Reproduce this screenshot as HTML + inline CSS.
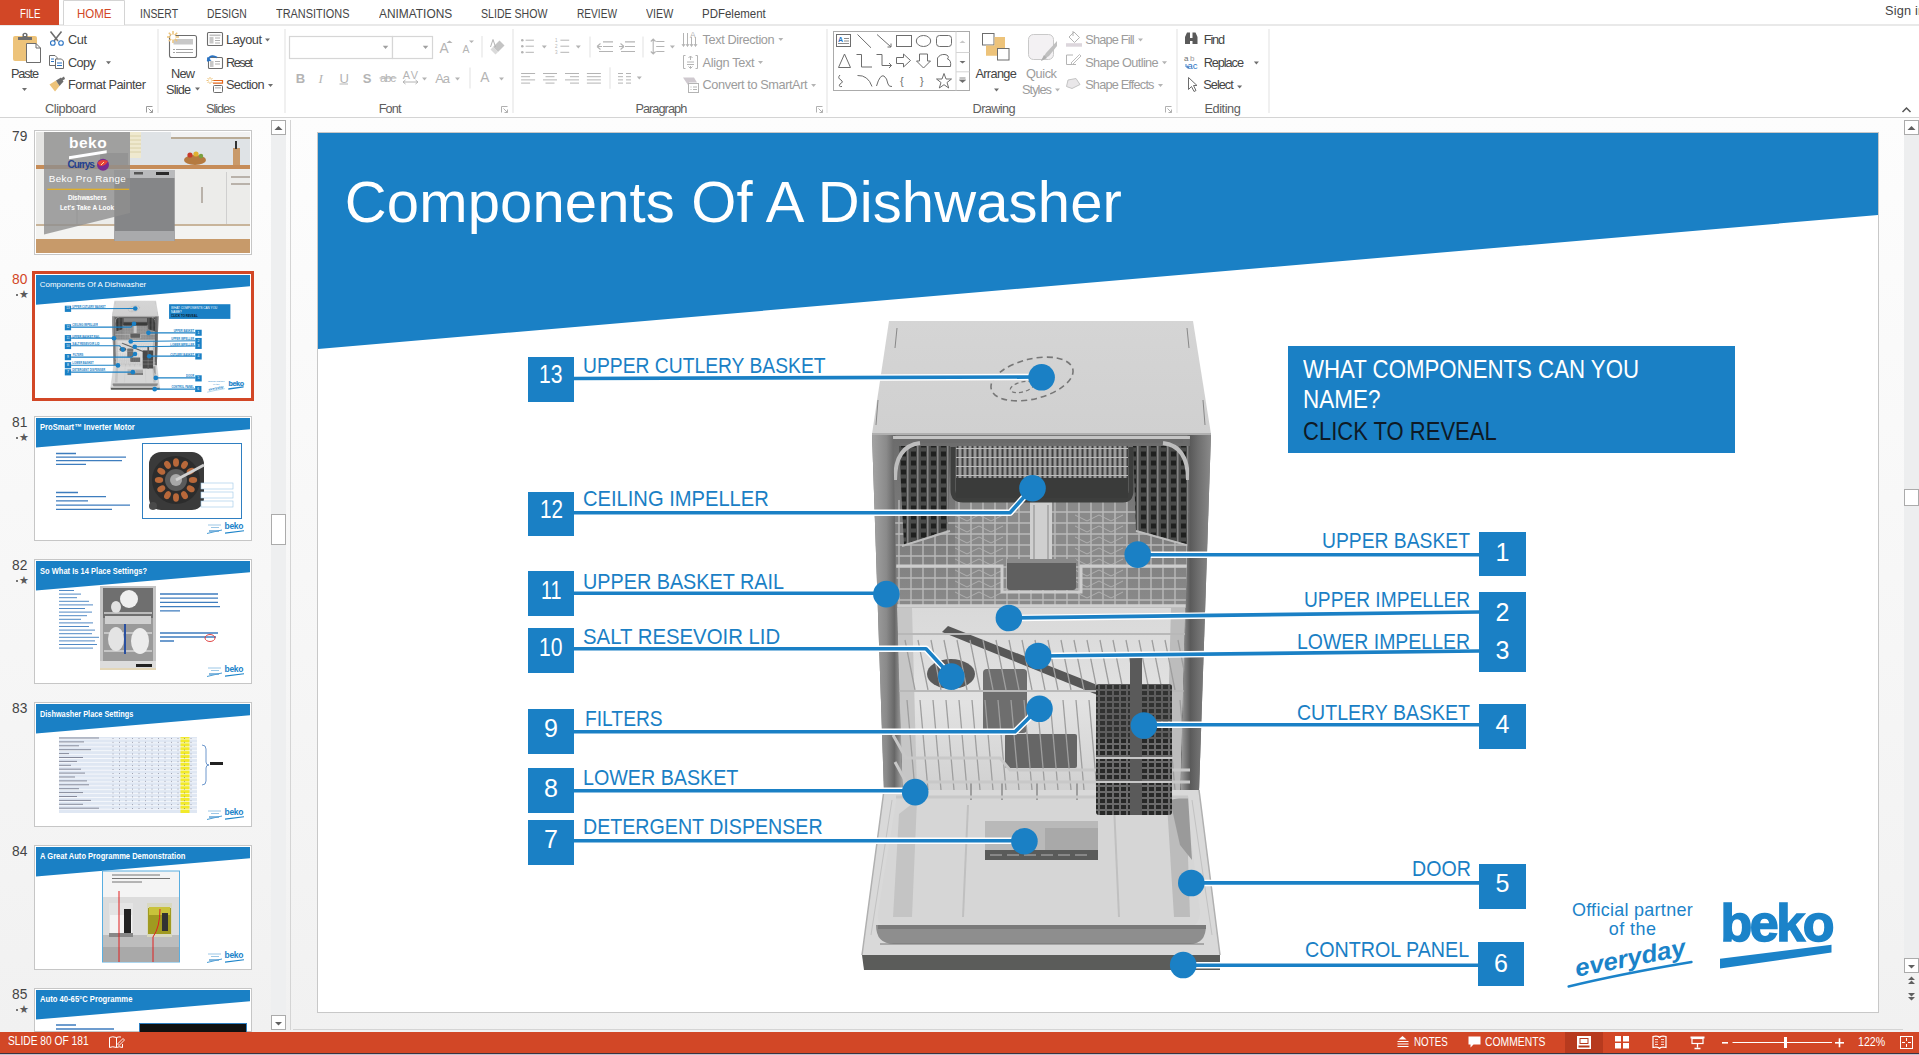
<!DOCTYPE html>
<html><head><meta charset="utf-8"><style>
*{margin:0;padding:0;box-sizing:border-box}
html,body{width:1919px;height:1055px;overflow:hidden;background:#fff;font-family:"Liberation Sans",sans-serif}
.t{position:absolute;white-space:pre;line-height:1}
.a{position:absolute}
svg{position:absolute;left:0;top:0;overflow:visible}
</style></head>
<body>
<svg width="1919" height="120">
<rect x="0" y="24.5" width="1919" height="1" fill="#D4D4D4"/>
<rect x="0" y="0" width="59" height="25" fill="#D24726"/>
<path d="M63.5 25 V0.5 H124.5 V25" fill="#fff" stroke="#D4D4D4" stroke-width="1"/>
<rect x="0" y="117" width="1919" height="1" fill="#D4D4D4"/>
<g fill="#E1E1E1">
<rect x="157.5" y="29" width="1" height="84"/>
<rect x="284.5" y="29" width="1" height="84"/>
<rect x="512.5" y="29" width="1" height="84"/>
<rect x="826.5" y="29" width="1" height="84"/>
<rect x="1176.5" y="29" width="1" height="84"/>
<rect x="1268.5" y="29" width="1" height="84"/>
</g>
<rect x="13" y="36" width="24" height="25" rx="2" fill="#EDC37A"/><path d="M18 40 V37 H22.5 V34 Q25 31.5 27.5 34 V37 H32 V40 Z" fill="#6D6D6D"/><rect x="24" y="34.2" width="2" height="1.8" fill="#fff"/><path d="M26.5 62.5 V43.5 H36 L40.5 48 V62.5 Z" fill="#fff" stroke="#6D6D6D" stroke-width="1"/><path d="M36 43.5 V48 H40.5" fill="none" stroke="#6D6D6D" stroke-width="1"/><path d="M22.0 88.0 h5 l-2.5 3.0 z" fill="#6D6D6D"/><path d="M50.5 31.5 L58 41 M61.5 31.5 L54 41" stroke="#6D6D6D" stroke-width="1.6"/><circle cx="52.8" cy="43" r="2.3" fill="none" stroke="#2A73C3" stroke-width="1.1"/><circle cx="61" cy="43" r="2.3" fill="none" stroke="#2A73C3" stroke-width="1.1"/><path d="M49.5 65.5 V55.5 H55 L57 57.5 V65.5 Z" fill="#fff" stroke="#6D6D6D"/><path d="M55.5 68.5 V59 H61.5 L63.5 61 V68.5 Z" fill="#fff" stroke="#6D6D6D"/><path d="M51 59h3M51 61.5h3M57 63h5M57 65.5h5" stroke="#2A73C3" stroke-width="1"/><path d="M106.0 61.3 h5 l-2.5 3.0 z" fill="#6D6D6D"/><path d="M49.5 84.5 L56 80.5 L59.5 86 L55 91.5 Z" fill="#EDC37A"/><path d="M56 80.5 L61 77.5 L63.5 81.5 L59.5 86 Z" fill="#6D6D6D"/><path d="M61 78.5 L64 76.5 L65 79 L62.5 80.5Z" fill="#6D6D6D"/><path d="M146.5 112.5 V106.5 H152.5" fill="none" stroke="#9A9A9A" stroke-width="1"/><path d="M148.5 108.5 L152.5 112.5 M152.5 109.5 V112.5 H149.5" fill="none" stroke="#9A9A9A" stroke-width="1"/><rect x="169.5" y="35.5" width="27" height="22" rx="2" fill="#fff" stroke="#6D6D6D" stroke-width="1.1"/><rect x="173.5" y="39" width="19.5" height="5.5" fill="#C8C8C8"/><path d="M173 49.5h2M176 49.5h17M173 52.5h2M176 52.5h17" stroke="#9A9A9A" stroke-width="0.9"/><g stroke="#EDC37A" stroke-width="1.5"><path d="M173 31v12M167 37h12M168.8 32.8l8.4 8.4M177.2 32.8l-8.4 8.4"/></g><circle cx="173" cy="37" r="2.6" fill="#fff"/><path d="M195.0 87.5 h5 l-2.5 3.0 z" fill="#6D6D6D"/><rect x="207.5" y="32.5" width="15" height="13" rx="1" fill="#fff" stroke="#6D6D6D" stroke-width="1.1"/><rect x="209.5" y="34.5" width="11" height="1.6" fill="#C0C0C0"/><rect x="209.5" y="37" width="4" height="6.5" fill="#C8C8C8"/><path d="M215 38h5M215 40.5h5M215 43h5" stroke="#9A9A9A" stroke-width="0.8"/><path d="M265.0 38.5 h5 l-2.5 3.0 z" fill="#6D6D6D"/><rect x="208.5" y="57.5" width="14" height="11" rx="1" fill="#fff" stroke="#6D6D6D" stroke-width="1.1"/><rect x="210" y="61" width="3.5" height="6" fill="#C8C8C8"/><path d="M215 61.5h5M215 64h5" stroke="#9A9A9A" stroke-width="0.8"/><path d="M207.5 61 Q210 53.5 217 57.5" fill="none" stroke="#2A73C3" stroke-width="1.6"/><path d="M207 57 L207.3 61.8 L211.5 60.5Z" fill="#2A73C3"/><path d="M213 80.5 H222.5 V83.2 H213" fill="none" stroke="#E2661A" stroke-width="1.2"/><rect x="213.5" y="85.5" width="9" height="7" rx="1" fill="#fff" stroke="#6D6D6D"/><rect x="215" y="87" width="6" height="1.6" fill="#C8C8C8"/><g stroke="#EDC37A" stroke-width="1"><path d="M210 77v7M206.5 80.5h7M207.5 78l5 5M212.5 78l-5 5"/></g><circle cx="210" cy="80.5" r="1.5" fill="#fff"/><path d="M268.0 84.0 h5 l-2.5 3.0 z" fill="#6D6D6D"/><rect x="289.5" y="36.5" width="103" height="22" fill="#fff" stroke="#D6D6D6" stroke-width="1.2"/><rect x="392.5" y="36.5" width="40" height="22" fill="#fff" stroke="#D6D6D6" stroke-width="1.2"/><path d="M382.8 45.8 h5.5 l-2.8 3.3 z" fill="#A0A0A0"/><path d="M422.8 45.8 h5.5 l-2.8 3.3 z" fill="#A0A0A0"/><path d="M446.5 43 l3-2.5 l3 2.5z" fill="#B4B4B4"/><path d="M469 40.5 h5 l-2.5 2.5z" fill="#B4B4B4"/><rect x="481.5" y="36" width="1" height="21.5" fill="#E1E1E1"/><rect x="469.5" y="67.5" width="1" height="21" fill="#E1E1E1"/><path d="M493 47 L499.5 40.5 L504.5 45.5 L498 52 Z" fill="#C4C4C4"/><path d="M490.5 49.5 L493 47 L498 52 L495.5 54.5 Z" fill="#DADADA"/><path d="M490.5 47 L493 39.5 L495.5 47" fill="none" stroke="#B4B4B4" stroke-width="1"/><rect x="339.5" y="83.5" width="8.5" height="1" fill="#B4B4B4"/><rect x="379.5" y="77.5" width="17" height="1" fill="#B4B4B4"/><path d="M403 82 H418 M403 82 l2.5-2 M403 82 l2.5 2 M418 82 l-2.5-2 M418 82 l-2.5 2" stroke="#B4B4B4" stroke-width="1" fill="none"/><path d="M422.0 77.5 h5 l-2.5 3.0 z" fill="#B4B4B4"/><path d="M455.0 77.5 h5 l-2.5 3.0 z" fill="#B4B4B4"/><path d="M499.0 77.5 h5 l-2.5 3.0 z" fill="#B4B4B4"/><path d="M501.5 112.5 V106.5 H507.5" fill="none" stroke="#B0B0B0" stroke-width="1"/><path d="M503.5 108.5 L507.5 112.5 M507.5 109.5 V112.5 H504.5" fill="none" stroke="#B0B0B0" stroke-width="1"/><g fill="#B4B4B4"><circle cx="522.3" cy="40.2" r="1.3"/><circle cx="522.3" cy="46.2" r="1.3"/><circle cx="522.3" cy="52.3" r="1.3"/></g><path d="M525.6 40.2h8.3M525.6 46.2h8.3M525.6 52.3h8.3M560.4 40.2h8.8M560.4 46.2h8.8M560.4 52.3h8.8" stroke="#B4B4B4" stroke-width="1"/><text x="555" y="42" font-size="4.5" fill="#B4B4B4" font-family="Liberation Sans">1</text><text x="555" y="48" font-size="4.5" fill="#B4B4B4" font-family="Liberation Sans">2</text><text x="555" y="54" font-size="4.5" fill="#B4B4B4" font-family="Liberation Sans">3</text><path d="M541.8 45.5 h5 l-2.5 3.0 z" fill="#B4B4B4"/><path d="M575.8 45.5 h5 l-2.5 3.0 z" fill="#B4B4B4"/><path d="M669.9 45.5 h5 l-2.5 3.0 z" fill="#B4B4B4"/><rect x="589.5" y="36.5" width="1" height="21" fill="#E1E1E1"/><rect x="642.5" y="36.5" width="1" height="21" fill="#E1E1E1"/><rect x="609.5" y="67.3" width="1" height="21.5" fill="#E1E1E1"/><path d="M603 41.9h10M603 46.5h10M599 51.5h14M597 46.5 l3.5-3 M597 46.5 l3.5 3 M597 46.5 h5" stroke="#B4B4B4" stroke-width="1.1" fill="none"/><path d="M625 41.9h10M625 46.5h10M621 51.5h14M624 46.5 l-3.5-3 M624 46.5 l-3.5 3 M624 46.5 h-5" stroke="#B4B4B4" stroke-width="1.1" fill="none"/><path d="M653.2 39 V54 M650.8 41.5 l2.4-2.5 l2.4 2.5 M650.8 51.5 l2.4 2.5 l2.4-2.5 M656.2 41.5h8.2M656.2 46.5h8.2M656.2 51.5h8.2" stroke="#B4B4B4" stroke-width="1.1" fill="none"/><path d="M521.1 73.5h14M521.1 76.7h9M521.1 79.9h14M521.1 83.1h9" stroke="#B4B4B4" stroke-width="1"/><path d="M543.0 73.5h14M545.5 76.7h9M543.0 79.9h14M545.5 83.1h9" stroke="#B4B4B4" stroke-width="1"/><path d="M565.0 73.5h14M570.0 76.7h9M565.0 79.9h14M570.0 83.1h9" stroke="#B4B4B4" stroke-width="1"/><path d="M586.9 73.5h14M586.9 76.7h14M586.9 79.9h14M586.9 83.1h14" stroke="#B4B4B4" stroke-width="1"/><path d="M618 73.5h5M618 76.7h5M618 79.9h5M618 83.1h5M626 73.5h5M626 76.7h5M626 79.9h5M626 83.1h5" stroke="#B4B4B4" stroke-width="1"/><path d="M636.8 76.5 h5 l-2.5 3.0 z" fill="#B4B4B4"/><path d="M683.5 33 V46 M687.5 33 V46 M691.5 37 V46 M695.5 37 V46" stroke="#B4B4B4" stroke-width="1"/><path d="M682 44 l1.5 2.5 l1.5-2.5 M686 44 l1.5 2.5 l1.5-2.5 M690 44 l1.5 2.5 l1.5-2.5 M694 44 l1.5 2.5 l1.5-2.5" stroke="#B4B4B4" fill="none" stroke-width="1"/><text x="690" y="38" font-size="8.5" fill="#B4B4B4" font-family="Liberation Sans">A</text><path d="M685.5 55.5 h-2 v13 h2 M695.5 55.5 h2 v13 h-2 M687 62h7M687 64.5h7 M690.5 56 v4 M688.5 58 l2-2 l2 2 M690.5 68 v-2 M688.5 66.5 l2 2 l2-2" stroke="#B4B4B4" stroke-width="1" fill="none"/><path d="M683 77.5 h11 l3 5 h-8 v4 z" fill="#CFC9CF"/><rect x="688.5" y="83.5" width="10" height="9" fill="#fff" stroke="#B4B4B4"/><path d="M690.5 87h1M693 87h4M690.5 89.5h1M693 89.5h4" stroke="#B4B4B4"/><path d="M778.3 38.0 h5 l-2.5 3.0 z" fill="#B4B4B4"/><path d="M758.0 61.0 h5 l-2.5 3.0 z" fill="#B4B4B4"/><path d="M811.1 84.0 h5 l-2.5 3.0 z" fill="#B4B4B4"/><path d="M816.5 112.5 V106.5 H822.5" fill="none" stroke="#B0B0B0" stroke-width="1"/><path d="M818.5 108.5 L822.5 112.5 M822.5 109.5 V112.5 H819.5" fill="none" stroke="#B0B0B0" stroke-width="1"/><rect x="833.5" y="31.5" width="136" height="59" fill="#fff" stroke="#ABABAB" stroke-width="1"/><rect x="955.5" y="31.5" width="1" height="59" fill="#D4D4D4"/><rect x="956" y="52" width="13.5" height="1" fill="#D4D4D4"/><rect x="956" y="71.3" width="13.5" height="1" fill="#D4D4D4"/><path d="M959.5 43 l3-2.5 l3 2.5z" fill="#C8C8C8"/><path d="M959.5 61 h6 l-3 2.5z" fill="#6D6D6D"/><path d="M959.5 78 h6 M959.5 80 h6 l-3 2.5z" stroke="#6D6D6D" fill="#6D6D6D" stroke-width="0.8"/><rect x="836.5" y="34.5" width="14" height="12" fill="#fff" stroke="#6D6D6D"/><text x="838" y="42" font-size="7" font-weight="bold" fill="#2A73C3" font-family="Liberation Sans">A</text><path d="M844 38.5h5M844 41h5M838 43.5h11" stroke="#6D6D6D" stroke-width="0.8"/><path d="M857.5 34.5 L871 47.8" stroke="#6D6D6D"/><path d="M877 34.5 L891 47 M891 47 v-3.5 M891 47 h-3.5" stroke="#6D6D6D" fill="none"/><rect x="896.5" y="35.5" width="15" height="11" fill="none" stroke="#6D6D6D"/><ellipse cx="923.5" cy="41" rx="7.2" ry="5.5" fill="none" stroke="#6D6D6D"/><rect x="936.5" y="35.5" width="15" height="11" rx="3" fill="none" stroke="#6D6D6D"/><path d="M838.5 67.5 L844.5 54 L850.5 67.5 Z" fill="none" stroke="#6D6D6D"/><path d="M856.5 54.5 H861.5 V67 H872" fill="none" stroke="#6D6D6D"/><path d="M876.5 54.5 H882 V65.5 H891.5 M889 63 l2.5 2.5 l-2.5 2.5" fill="none" stroke="#6D6D6D"/><path d="M896.5 57.5 H903.5 V54 L910.5 60.5 L903.5 67 V63.5 H896.5 Z" fill="none" stroke="#6D6D6D"/><path d="M919.5 54 H927.5 V61 H930.5 L923.5 68 L916.5 61 H919.5 Z" fill="none" stroke="#6D6D6D"/><path d="M937.5 58 Q940 54 945 54.5 Q950 55.5 947.5 59 Q951.5 60 950.5 66.5 H937.5 Z" fill="none" stroke="#6D6D6D"/><path d="M840 75 Q837 78 841 80 Q844 82 840 84 Q838 87 842 86.5" fill="none" stroke="#6D6D6D"/><path d="M857.5 75.5 Q868 75 872 86.5" fill="none" stroke="#6D6D6D"/><path d="M876.5 86 Q880 74 884 76 Q887 78 888 84 Q889 87 892 86.5" fill="none" stroke="#6D6D6D"/><text x="900" y="85" font-size="11" fill="#6D6D6D" font-family="Liberation Sans">{</text><text x="920" y="85" font-size="11" fill="#6D6D6D" font-family="Liberation Sans">}</text><path d="M944 73.5 L946 79 L951.5 79 L947 82.5 L948.7 88 L944 84.7 L939.3 88 L941 82.5 L936.5 79 L942 79 Z" fill="none" stroke="#6D6D6D"/><rect x="982.5" y="33.5" width="11.5" height="11.5" fill="#fff" stroke="#6D6D6D"/><path d="M994.5 37 H1005 V48 H997 V55.7 H986 V45.5 H994.5 Z" fill="#EDC37A"/><rect x="997.5" y="48.5" width="11.5" height="11.5" fill="#fff" stroke="#6D6D6D"/><path d="M994.0 88.5 h5 l-2.5 3.0 z" fill="#6D6D6D"/><rect x="1028.5" y="34.5" width="25" height="25" rx="5" fill="#F3F1F3" stroke="#C9C9C9"/><path d="M1041 61 L1046 53 L1057 41 L1057 46 L1049 56 Z" fill="#C0C0C0"/><path d="M1041 61 l3-6 l3 3z" fill="#B0B0B0"/><path d="M1055.0 88.5 h5 l-2.5 3.0 z" fill="#B4B4B4"/><rect x="1066" y="43.2" width="16" height="3.5" fill="#DCD6DC"/><path d="M1069 37 L1074 32 L1079.5 37.5 L1074.5 42.5 Z" fill="#fff" stroke="#B4B4B4"/><path d="M1073 31 V36" stroke="#B4B4B4"/><path d="M1066.5 55 H1073 M1066.5 55 V64.5 H1076" fill="none" stroke="#B4B4B4"/><path d="M1071 63 L1079.5 54.5 L1081 56 L1072.5 64.5 Z" fill="#fff" stroke="#B4B4B4" stroke-width="0.9"/><path d="M1068 80 L1076 78.5 L1080 84.5 L1072 88.5 L1066.5 86.5 Z" fill="#E9E7E9" stroke="#C4C4C4"/><path d="M1138.0 38.5 h5 l-2.5 3.0 z" fill="#B4B4B4"/><path d="M1162.0 61.3 h5 l-2.5 3.0 z" fill="#B4B4B4"/><path d="M1158.0 84.0 h5 l-2.5 3.0 z" fill="#B4B4B4"/><path d="M1165.5 112.5 V106.5 H1171.5" fill="none" stroke="#B0B0B0" stroke-width="1"/><path d="M1167.5 108.5 L1171.5 112.5 M1171.5 109.5 V112.5 H1168.5" fill="none" stroke="#B0B0B0" stroke-width="1"/><path d="M1185 44 V37 L1187 32.5 H1190 V38 H1192.5 V32.5 H1195.5 L1197.5 37 V44 H1192.5 V41 H1190 V44 Z" fill="#5A5A5A"/><text x="1184" y="61" font-size="8" fill="#6D6D6D" font-family="Liberation Sans">a</text><text x="1190" y="61" font-size="8" fill="#9A9A9A" font-family="Liberation Sans">b</text><text x="1187.5" y="69" font-size="9.5" fill="#2A73C3" font-family="Liberation Sans">ac</text><path d="M1186 64 v3 h2.5 M1187 65.8 l1.5 1.2 l-1.5 1.2" stroke="#2A73C3" stroke-width="0.9" fill="none"/><path d="M1253.9 61.5 h5 l-2.5 3.0 z" fill="#6D6D6D"/><path d="M1188.5 77.5 V89.5 L1191.5 86.5 L1194 91.5 L1196 90.5 L1193.5 85.5 L1197 85.5 Z" fill="#fff" stroke="#6D6D6D" stroke-width="1"/><path d="M1237.1 85.5 h5 l-2.5 3.0 z" fill="#6D6D6D"/><path d="M1902.5 112 L1906.5 108 L1910.5 112" fill="none" stroke="#555" stroke-width="1.5"/>
</svg><div style="position:absolute;left:0;top:0.8px"><div class=t style='left:19.5px;top:6.8px;font-size:12.75px;color:#fff;transform:scaleX(0.7610);transform-origin:0 0;'>FILE</div>
<div class=t style='left:76.5px;top:6.8px;font-size:12.75px;color:#D24726;transform:scaleX(0.9020);transform-origin:0 0;'>HOME</div>
<div class=t style='left:139.5px;top:6.8px;font-size:12.75px;color:#444444;transform:scaleX(0.8167);transform-origin:0 0;'>INSERT</div>
<div class=t style='left:207.0px;top:6.8px;font-size:12.75px;color:#444444;transform:scaleX(0.8120);transform-origin:0 0;'>DESIGN</div>
<div class=t style='left:276.0px;top:6.8px;font-size:12.75px;color:#444444;transform:scaleX(0.8575);transform-origin:0 0;'>TRANSITIONS</div>
<div class=t style='left:378.8px;top:6.8px;font-size:12.75px;color:#444444;transform:scaleX(0.9336);transform-origin:0 0;'>ANIMATIONS</div>
<div class=t style='left:481.0px;top:6.8px;font-size:12.75px;color:#444444;transform:scaleX(0.8306);transform-origin:0 0;'>SLIDE SHOW</div>
<div class=t style='left:577.0px;top:6.8px;font-size:12.75px;color:#444444;transform:scaleX(0.7953);transform-origin:0 0;'>REVIEW</div>
<div class=t style='left:645.8px;top:6.8px;font-size:12.75px;color:#444444;transform:scaleX(0.8345);transform-origin:0 0;'>VIEW</div>
<div class=t style='left:702.0px;top:6.8px;font-size:12.75px;color:#444444;transform:scaleX(0.9002);transform-origin:0 0;'>PDFelement</div>
<div class=t style='left:1885.0px;top:4.5px;font-size:12.75px;color:#444444;letter-spacing:0.17px;'>Sign in</div>
<div class=t style='left:11.0px;top:67.0px;font-size:12.75px;color:#444444;letter-spacing:-1.15px;'>Paste</div>
<div class=t style='left:68.0px;top:33.0px;font-size:12.75px;color:#444444;letter-spacing:-0.42px;'>Cut</div>
<div class=t style='left:68.0px;top:55.8px;font-size:12.75px;color:#444444;letter-spacing:-0.59px;'>Copy</div>
<div class=t style='left:68.0px;top:78.7px;font-size:12.75px;color:#444444;letter-spacing:-0.49px;'>Format Painter</div>
<div class=t style='left:45.0px;top:101.8px;font-size:12.75px;color:#5E5E5E;letter-spacing:-0.45px;'>Clipboard</div>
<div class=t style='left:171.0px;top:67.0px;font-size:12.75px;color:#444444;letter-spacing:-0.76px;'>New</div>
<div class=t style='left:166.0px;top:82.8px;font-size:12.75px;color:#444444;letter-spacing:-0.84px;'>Slide</div>
<div class=t style='left:226.0px;top:33.0px;font-size:12.75px;color:#444444;letter-spacing:-0.46px;'>Layout</div>
<div class=t style='left:226.0px;top:55.8px;font-size:12.75px;color:#444444;letter-spacing:-1.58px;'>Reset</div>
<div class=t style='left:226.0px;top:78.7px;font-size:12.75px;color:#444444;letter-spacing:-0.67px;'>Section</div>
<div class=t style='left:206.0px;top:101.8px;font-size:12.75px;color:#5E5E5E;letter-spacing:-1.05px;'>Slides</div>
<div class=t style='left:378.7px;top:101.8px;font-size:12.75px;color:#5E5E5E;letter-spacing:-0.91px;'>Font</div>
<div class=t style='left:295.7px;top:71.1px;font-size:13.04px;color:#B4B4B4;font-weight:bold;'>B</div>
<div class=t style='left:318.5px;top:71.1px;font-size:13.04px;color:#B4B4B4;font-style:italic;font-family:"Liberation Serif",sans-serif;'>I</div>
<div class=t style='left:339.4px;top:71.1px;font-size:13.04px;color:#B4B4B4;'>U</div>
<div class=t style='left:362.7px;top:71.1px;font-size:13.04px;color:#B4B4B4;font-weight:bold;'>S</div>
<div class=t style='left:380.0px;top:72.3px;font-size:11.59px;color:#B4B4B4;letter-spacing:-1.34px;'>abc</div>
<div class=t style='left:402.7px;top:69.3px;font-size:10.87px;color:#B4B4B4;letter-spacing:1.61px;'>AV</div>
<div class=t style='left:435.3px;top:71.1px;font-size:13.04px;color:#B4B4B4;letter-spacing:-1.25px;'>Aa</div>
<div class=t style='left:480.2px;top:70.5px;font-size:13.77px;color:#B4B4B4;'>A</div>
<div class=t style='left:439.6px;top:41.0px;font-size:13.77px;color:#B4B4B4;'>A</div>
<div class=t style='left:462.4px;top:43.8px;font-size:10.43px;color:#B4B4B4;'>A</div>
<div class=t style='left:702.6px;top:33.3px;font-size:12.75px;color:#9C9C9C;letter-spacing:-0.40px;'>Text Direction</div>
<div class=t style='left:702.6px;top:55.8px;font-size:12.75px;color:#9C9C9C;letter-spacing:-0.34px;'>Align Text</div>
<div class=t style='left:702.6px;top:78.7px;font-size:12.75px;color:#9C9C9C;letter-spacing:-0.43px;'>Convert to SmartArt</div>
<div class=t style='left:635.4px;top:101.8px;font-size:12.75px;color:#5E5E5E;letter-spacing:-0.96px;'>Paragraph</div>
<div class=t style='left:975.4px;top:66.9px;font-size:12.75px;color:#444444;letter-spacing:-0.65px;'>Arrange</div>
<div class=t style='left:1026.0px;top:66.9px;font-size:12.75px;color:#9C9C9C;letter-spacing:-0.40px;'>Quick</div>
<div class=t style='left:1022.0px;top:82.8px;font-size:12.75px;color:#9C9C9C;letter-spacing:-0.95px;'>Styles</div>
<div class=t style='left:1085.2px;top:33.0px;font-size:12.75px;color:#9C9C9C;letter-spacing:-0.80px;'>Shape Fill</div>
<div class=t style='left:1085.2px;top:55.8px;font-size:12.75px;color:#9C9C9C;letter-spacing:-0.61px;'>Shape Outline</div>
<div class=t style='left:1085.2px;top:78.7px;font-size:12.75px;color:#9C9C9C;letter-spacing:-0.82px;'>Shape Effects</div>
<div class=t style='left:972.6px;top:101.8px;font-size:12.75px;color:#5E5E5E;letter-spacing:-0.63px;'>Drawing</div>
<div class=t style='left:1203.7px;top:33.0px;font-size:12.75px;color:#444444;letter-spacing:-1.10px;'>Find</div>
<div class=t style='left:1203.7px;top:55.8px;font-size:12.75px;color:#444444;letter-spacing:-1.08px;'>Replace</div>
<div class=t style='left:1203.3px;top:78.7px;font-size:12.75px;color:#444444;letter-spacing:-0.99px;'>Select</div>
<div class=t style='left:1204.5px;top:101.8px;font-size:12.75px;color:#5E5E5E;letter-spacing:-0.45px;'>Editing</div></div><div class=a style="left:0;top:118px;width:1919px;height:914px;background:linear-gradient(#fdfdfd,#f1f1f1)"></div>
<svg width="1919" height="1055">
<rect x="271" y="135" width="15" height="880" fill="#EEEFF0"/>
<rect x="271.5" y="120.5" width="14" height="14" fill="#fff" stroke="#ABABAB"/>
<path d="M274.5 130 L278.5 126 L282.5 130 Z" fill="#606060"/>
<rect x="271.5" y="514.5" width="14" height="30" fill="#fff" stroke="#ABABAB"/>
<rect x="271.5" y="1015.5" width="14" height="14" fill="#fff" stroke="#ABABAB"/>
<path d="M275 1022 L278.5 1025.5 L282 1022 Z" fill="#606060"/>
<rect x="290" y="120" width="1" height="910" fill="#D4D4D4"/>
<rect x="293" y="1029" width="1610" height="1" fill="#D4D4D4"/>
<!-- right scrollbar -->
<rect x="1904" y="135" width="15" height="825" fill="#EDEEEF"/>
<rect x="1904.5" y="120.5" width="14" height="14" fill="#fff" stroke="#ABABAB"/>
<path d="M1907.5 130 L1911.5 126 L1915.5 130 Z" fill="#606060"/>
<rect x="1904.5" y="489.5" width="14" height="16" fill="#fff" stroke="#ABABAB"/>
<rect x="1904.5" y="958.5" width="14" height="14" fill="#fff" stroke="#ABABAB"/>
<path d="M1908 965 L1911.5 968.5 L1915 965 Z" fill="#606060"/>
<path d="M1908 980 l3.5-3.5 l3.5 3.5 z M1908 984 l3.5-3.5 l3.5 3.5 z" fill="#606060"/>
<path d="M1908 993 l3.5 3.5 l3.5-3.5 z M1908 997 l3.5 3.5 l3.5-3.5 z" fill="#606060"/>

</svg>
<div class=a style="left:34px;top:130px;width:218px;height:125px;border:1px solid #C6C6C6;background:#fff"></div>
<div class=a style="left:32px;top:271px;width:222px;height:130px;border:3px solid #D24726;background:#fff"></div>
<div class=a style="left:34px;top:416px;width:218px;height:125px;border:1px solid #C6C6C6;background:#fff"></div>
<div class=a style="left:34px;top:559px;width:218px;height:125px;border:1px solid #C6C6C6;background:#fff"></div>
<div class=a style="left:34px;top:702px;width:218px;height:125px;border:1px solid #C6C6C6;background:#fff"></div>
<div class=a style="left:34px;top:845px;width:218px;height:125px;border:1px solid #C6C6C6;background:#fff"></div>
<div class=a style="left:34px;top:988px;width:218px;height:44px;border:1px solid #C6C6C6;background:#fff"></div>
<div class=t style="left:18.5px;top:288.5px;font-size:11px;color:#5a5a5a">&#9733;</div><div class=a style="left:16px;top:294px;width:2px;height:1.5px;background:#777"></div>
<div class=t style="left:18.5px;top:431.5px;font-size:11px;color:#5a5a5a">&#9733;</div><div class=a style="left:16px;top:437px;width:2px;height:1.5px;background:#777"></div>
<div class=t style="left:18.5px;top:574.5px;font-size:11px;color:#5a5a5a">&#9733;</div><div class=a style="left:16px;top:580px;width:2px;height:1.5px;background:#777"></div>
<div class=t style="left:18.5px;top:1003.5px;font-size:11px;color:#5a5a5a">&#9733;</div><div class=a style="left:16px;top:1009px;width:2px;height:1.5px;background:#777"></div>
<svg width="1919" height="1055"><rect x="36" y="132" width="214" height="121" fill="#dfe3e6"/><rect x="36" y="132" width="94" height="33" fill="#e4e4e2"/><rect x="130" y="132" width="11" height="26" fill="#efe9cf"/><path d="M130 136h11M130 140h11M130 144h11M130 148h11M130 152h11" stroke="#d9d0a8" stroke-width="1"/><rect x="171" y="132" width="79" height="5" fill="#f2f2f2"/><rect x="171" y="137" width="79" height="2" fill="#b9ab96"/><rect x="100" y="153" width="28" height="12" fill="#a8a8a8"/><rect x="36" y="165" width="214" height="4" fill="#c68c58"/><rect x="36" y="169" width="214" height="62" fill="#ececea"/><rect x="76" y="192" width="2" height="35" fill="#d0d0d0"/><rect x="226" y="172" width="1" height="55" fill="#cfcfcf"/><rect x="201" y="187" width="2" height="16" fill="#b9b2aa"/><rect x="231" y="176" width="19" height="2" fill="#b9b2aa"/><rect x="231" y="183" width="19" height="2" fill="#b9b2aa"/><rect x="36" y="224" width="214" height="2" fill="#c8b49a"/><rect x="36" y="226" width="214" height="14" fill="#f3f3f1"/><rect x="36" y="239" width="214" height="14" fill="#c79a6a"/><ellipse cx="195" cy="160" rx="11" ry="5" fill="#b57a40"/><circle cx="190" cy="155" r="2.6" fill="#c83a2a"/><circle cx="196" cy="154" r="2.6" fill="#e0b030"/><circle cx="201" cy="156" r="2.2" fill="#7aa040"/><rect x="233" y="148" width="7" height="17" fill="#c99a6a"/><rect x="235" y="141" width="2" height="8" fill="#333"/><rect x="114.5" y="170" width="60" height="71" fill="#8d8e90"/><rect x="114.5" y="170" width="60" height="8" fill="#b9babc"/><rect x="134" y="172" width="9" height="2.5" fill="#555"/><rect x="156" y="172" width="13" height="3" fill="#2a2a2a"/><rect x="114.5" y="178" width="60" height="63" fill="#858688"/><rect x="114.5" y="231" width="60" height="10" fill="#a9aaac"/><polygon points="44,132 130,132 130,213 44,234.6" fill="#8f8f8f" opacity="0.8"/><path d="M69 156.3 L106.7 150.2 L106.7 153.2 L69 159.3Z" fill="#fff"/><circle cx="103" cy="164.7" r="6" fill="#7a2a90"/><path d="M97.5 163 Q101 158 108 161 Q106 166 100 166Z" fill="#e8423a"/><path d="M101 165 l3-3" stroke="#ffe9a0" stroke-width="1"/><rect x="47.3" y="188.7" width="81.8" height="1.2" fill="#e6b020"/><polygon points="36,418 250,418 250,429.3 36,447.6" fill="#1A80C5"/><path d="M56 453.5h20M56 457.1h70M56 460.7h66M56 464.3h30" stroke="#2A6FB8" stroke-width="1.3" opacity="0.9"/><path d="M56 492.5h22M56 496.7h50M56 500.9h32M56 505.1h74M56 509.3h56" stroke="#2A6FB8" stroke-width="1.3" opacity="0.9"/><rect x="142.5" y="443.5" width="99" height="75" fill="#fff" stroke="#2F7FC1" stroke-width="1"/><rect x="149" y="452" width="55" height="58" rx="12" fill="#3a3a3a"/><circle cx="153" cy="506" r="4" fill="#4a4a4a"/><circle cx="176" cy="480" r="24" fill="#2c2c2c"/><ellipse cx="193.0" cy="480.0" rx="4.2" ry="3" transform="rotate(0 193.0 480.0)" fill="#b8683a"/><ellipse cx="190.7" cy="488.8" rx="4.2" ry="3" transform="rotate(30 190.7 488.8)" fill="#b8683a"/><ellipse cx="184.5" cy="495.2" rx="4.2" ry="3" transform="rotate(60 184.5 495.2)" fill="#b8683a"/><ellipse cx="176.0" cy="497.5" rx="4.2" ry="3" transform="rotate(90 176.0 497.5)" fill="#b8683a"/><ellipse cx="167.5" cy="495.2" rx="4.2" ry="3" transform="rotate(120 167.5 495.2)" fill="#b8683a"/><ellipse cx="161.3" cy="488.8" rx="4.2" ry="3" transform="rotate(150 161.3 488.8)" fill="#b8683a"/><ellipse cx="159.0" cy="480.0" rx="4.2" ry="3" transform="rotate(180 159.0 480.0)" fill="#b8683a"/><ellipse cx="161.3" cy="471.3" rx="4.2" ry="3" transform="rotate(210 161.3 471.3)" fill="#b8683a"/><ellipse cx="167.5" cy="464.8" rx="4.2" ry="3" transform="rotate(240 167.5 464.8)" fill="#b8683a"/><ellipse cx="176.0" cy="462.5" rx="4.2" ry="3" transform="rotate(270 176.0 462.5)" fill="#b8683a"/><ellipse cx="184.5" cy="464.8" rx="4.2" ry="3" transform="rotate(300 184.5 464.8)" fill="#b8683a"/><ellipse cx="190.7" cy="471.2" rx="4.2" ry="3" transform="rotate(330 190.7 471.2)" fill="#b8683a"/><circle cx="176" cy="480" r="11" fill="#5a5a5a"/><circle cx="176" cy="480" r="6" fill="#a8a8a8"/><path d="M176 480 L204 465" stroke="#d0d0d0" stroke-width="3"/><rect x="201" y="483" width="32" height="6" fill="#fff" stroke="#9cc7e6" stroke-width="0.6"/><rect x="201" y="492" width="32" height="6" fill="#fff" stroke="#9cc7e6" stroke-width="0.6"/><rect x="201" y="501" width="32" height="6" fill="#fff" stroke="#9cc7e6" stroke-width="0.6"/><path d="M225 532.5 L244 530.2 L244 531.3 L225 533.8Z" fill="#1B83C9"/><text x="224.5" y="528.5" font-size="8.5" font-weight="bold" fill="#1B83C9" font-family="Liberation Sans" textLength="19">beko</text><path d="M208 525h13M211 527.5h8" stroke="#9cc7e6" stroke-width="1"/><path d="M207 533.5 Q215 531.5 222 530" stroke="#1B83C9" stroke-width="0.8" fill="none"/><path d="M209 531h10" stroke="#5fa3d6" stroke-width="1.5"/><polygon points="36,561 250,561 250,572.3 36,590.6" fill="#1A80C5"/><path d="M59 590.5h15M59 594.1h22M59 597.7h18M59 601.3h30M59 604.9h34M59 608.5h26M59 612.1h33M59 615.7h28M59 619.3h22M59 622.9h34M59 626.5h30M59 630.1h36M59 633.7h33M59 637.3h40M59 640.9h36M59 644.5h38M59 648.1h34" stroke="#2A6FB8" stroke-width="0.9" opacity="0.9"/><rect x="100" y="586" width="56" height="82" fill="#c4c4c4"/><rect x="103" y="588" width="50" height="75" fill="#9a9a9a"/><rect x="103" y="588" width="50" height="30" fill="#6f6f6f"/><ellipse cx="129" cy="599" rx="9" ry="9" fill="#efefef"/><ellipse cx="116" cy="607" rx="5" ry="6" fill="#e2e2e2"/><rect x="105" y="616" width="46" height="8" fill="#d0d0d0"/><path d="M104 613 H152 M104 633 H152 M104 651 H152" stroke="#d5d5d5" stroke-width="1.5"/><ellipse cx="116" cy="639" rx="8" ry="12" fill="#e4e4e4"/><ellipse cx="140" cy="641" rx="9" ry="13" fill="#ececec"/><rect x="124" y="624" width="2" height="30" fill="#2a50a0"/><rect x="100" y="661" width="56" height="8" fill="#ddd"/><rect x="136" y="664" width="16" height="3" fill="#222"/><rect x="100" y="668" width="56" height="2" fill="#e4d7b8"/><path d="M160 594.0h58M160 598.2h58M160 602.4h58M160 606.6h60M160 610.8h20" stroke="#2A6FB8" stroke-width="1.3" opacity="0.9"/><path d="M160 633.0h58M160 637.0h56M160 641.0h14" stroke="#2A6FB8" stroke-width="1.3" opacity="0.9"/><ellipse cx="210" cy="638" rx="5" ry="3.5" fill="none" stroke="#d33" stroke-width="0.9"/><path d="M225 675.5 L244 673.2 L244 674.3 L225 676.8Z" fill="#1B83C9"/><text x="224.5" y="671.5" font-size="8.5" font-weight="bold" fill="#1B83C9" font-family="Liberation Sans" textLength="19">beko</text><path d="M208 668h13M211 670.5h8" stroke="#9cc7e6" stroke-width="1"/><path d="M207 676.5 Q215 674.5 222 673" stroke="#1B83C9" stroke-width="0.8" fill="none"/><path d="M209 674h10" stroke="#5fa3d6" stroke-width="1.5"/><polygon points="36,704 250,704 250,715.3 36,733.6" fill="#1A80C5"/><rect x="59" y="737" width="138" height="76" fill="#dfe7f3"/><rect x="180.5" y="737" width="9" height="76" fill="#f2ea2a"/><path d="M59 739.0h138M59 742.9h138M59 746.8h138M59 750.7h138M59 754.6h138M59 758.5h138M59 762.4h138M59 766.3h138M59 770.2h138M59 774.1h138M59 778.0h138M59 781.9h138M59 785.8h138M59 789.7h138M59 793.6h138M59 797.5h138M59 801.4h138M59 805.3h138M59 809.2h138" stroke="#ffffff" stroke-width="0.8" opacity="0.9"/><path d="M59 738.0h40M59 741.9h25M59 745.8h20M59 749.7h32M59 753.6h10M59 757.5h24M59 761.4h18M59 765.3h12M59 769.2h22M59 773.1h26M59 777.0h16M59 780.9h28M59 784.8h30M59 788.7h20M59 792.6h24M59 796.5h18M59 800.4h32M59 804.3h24M59 808.2h40" stroke="#3b3b50" stroke-width="0.6" opacity="0.9"/><path d="M113.0 738v74M119.5 738v74M126.0 738v74M132.5 738v74M139.0 738v74M145.5 738v74M152.0 738v74M158.5 738v74M165.0 738v74M171.5 738v74M178.0 738v74M184.5 738v74M191.0 738v74" stroke="#50506a" stroke-width="0.6" stroke-dasharray="0.8 3.1"/><path d="M202 745 q4 0 4 4 v13 q0 3 3 3 q-3 0 -3 3 v13 q0 4 -4 4" fill="none" stroke="#4a7fc0" stroke-width="0.8"/><rect x="210" y="762" width="13" height="3" fill="#222"/><path d="M225 818.5 L244 816.2 L244 817.3 L225 819.8Z" fill="#1B83C9"/><text x="224.5" y="814.5" font-size="8.5" font-weight="bold" fill="#1B83C9" font-family="Liberation Sans" textLength="19">beko</text><path d="M208 811h13M211 813.5h8" stroke="#9cc7e6" stroke-width="1"/><path d="M207 819.5 Q215 817.5 222 816" stroke="#1B83C9" stroke-width="0.8" fill="none"/><path d="M209 817h10" stroke="#5fa3d6" stroke-width="1.5"/><polygon points="36,847 250,847 250,858.3 36,876.6" fill="#1A80C5"/><rect x="102.5" y="871" width="77" height="91" fill="#f4f4f4" stroke="#5aaee0" stroke-width="1"/><path d="M112 875.0h48M112 878.5h58M112 882.0h30" stroke="#444" stroke-width="0.8" opacity="0.9"/><rect x="103" y="897" width="76" height="65" fill="#dcdcdc"/><rect x="103" y="935" width="76" height="27" fill="#bdbdbd"/><rect x="103" y="947" width="76" height="15" fill="#a9a9a9"/><rect x="109" y="903" width="24" height="34" fill="#e4e4e4"/><rect x="110" y="915" width="22" height="20" fill="#f4f4f4"/><rect x="124" y="909" width="7" height="24" fill="#222"/><rect x="109" y="933" width="24" height="4" fill="#888"/><rect x="147" y="903" width="25" height="34" fill="#d8d8c0"/><rect x="148" y="908" width="23" height="26" fill="#a09a20"/><rect x="149" y="907" width="21" height="8" fill="#c9c23a"/><rect x="162" y="913" width="6" height="18" fill="#333"/><path d="M119 891 V962" stroke="#e02020" stroke-width="1"/><path d="M160 909 Q160 927 153 937 V962" stroke="#e02020" stroke-width="1" fill="none"/><path d="M225 961.5 L244 959.2 L244 960.3 L225 962.8Z" fill="#1B83C9"/><text x="224.5" y="957.5" font-size="8.5" font-weight="bold" fill="#1B83C9" font-family="Liberation Sans" textLength="19">beko</text><path d="M208 954h13M211 956.5h8" stroke="#9cc7e6" stroke-width="1"/><path d="M207 962.5 Q215 960.5 222 959" stroke="#1B83C9" stroke-width="0.8" fill="none"/><path d="M209 960h10" stroke="#5fa3d6" stroke-width="1.5"/><polygon points="36,990 250,990 250,1001.3 36,1019.6" fill="#1A80C5"/><path d="M56 1025.0h20M56 1029.0h58" stroke="#2A6FB8" stroke-width="1.3" opacity="0.9"/><rect x="139.5" y="1023.5" width="107" height="20" fill="#111" stroke="#2F7FC1" stroke-width="1"/></svg>
<div class=a style="left:36px;top:275px;width:1560px;height:879px;overflow:hidden;transform:scale(0.1371794871794872);transform-origin:0 0;"><svg width="1560" height="879" viewBox="318 133 1560 879">
<rect x="318" y="133" width="1560" height="879" fill="#fff"/>
<polygon points="318,133 1878,133 1878,215 318,349" fill="#1A80C5"/>
<rect x="1288" y="346" width="447" height="107" fill="#1A80C5"/>

<defs>
<linearGradient id="gTop" x1="0" y1="0" x2="0" y2="1"><stop offset="0" stop-color="#D5D5D5"/><stop offset="1" stop-color="#D0D0D0"/></linearGradient>
<linearGradient id="gWallL" x1="0" y1="0" x2="1" y2="0"><stop offset="0" stop-color="#a4a4a4"/><stop offset="0.45" stop-color="#8a8a8a"/><stop offset="0.7" stop-color="#676767"/><stop offset="1" stop-color="#b0b0b0"/></linearGradient>
<linearGradient id="gWallR" x1="0" y1="0" x2="1" y2="0"><stop offset="0" stop-color="#a9a9a9"/><stop offset="0.35" stop-color="#5a5a5a"/><stop offset="0.6" stop-color="#6e6e6e"/><stop offset="1" stop-color="#8a8a8a"/></linearGradient>
<linearGradient id="gLow" x1="0" y1="0" x2="0" y2="1"><stop offset="0" stop-color="#d9d9d9"/><stop offset="0.5" stop-color="#e2e2e2"/><stop offset="1" stop-color="#cfcfcf"/></linearGradient>
<linearGradient id="gUp" x1="0" y1="0" x2="0" y2="1"><stop offset="0" stop-color="#6c6c6c"/><stop offset="1" stop-color="#8a8a8a"/></linearGradient>
<pattern id="pMesh" width="10" height="9" patternUnits="userSpaceOnUse"><rect width="10" height="9" fill="#4a4b4a"/><rect x="1" y="1.5" width="5" height="5" fill="#1f201f"/><rect x="7" y="0" width="1.5" height="9" fill="#858585"/></pattern>
<pattern id="pCut" width="7" height="6" patternUnits="userSpaceOnUse"><rect width="7" height="6" fill="#6a6a6a"/><rect x="1" y="1" width="5" height="4" fill="#272827"/></pattern>
<pattern id="pTray" width="5" height="9" patternUnits="userSpaceOnUse"><rect width="5" height="9" fill="#9a9a9a"/><rect x="1.5" y="0" width="2" height="9" fill="#404040"/><rect x="0" y="7" width="5" height="1" fill="#bdbdbd"/></pattern>
<clipPath id="cIn"><polygon points="893,436 1190,436 1181,792 902,792"/></clipPath>
</defs>
<polygon points="872,434 1211,434 1199,792 884,792" fill="#777"/>
<polygon points="872,434 896,434 904,792 884,792" fill="url(#gWallL)"/>
<polygon points="1187,434 1211,434 1199,792 1179,792" fill="url(#gWallR)"/>
<g clip-path="url(#cIn)">
<rect x="890" y="438" width="305" height="170" fill="url(#gUp)"/>
<rect x="955" y="500" width="172" height="106" fill="#8a8a8a"/>
<path d="M899 500 V606 M911 500 V606 M923 500 V606 M935 500 V606 M947 500 V606 M959 500 V606 M971 500 V606 M983 500 V606 M995 500 V606 M1007 500 V606 M1019 500 V606 M1031 500 V606 M1043 500 V606 M1055 500 V606 M1067 500 V606 M1079 500 V606 M1091 500 V606 M1103 500 V606 M1115 500 V606 M1127 500 V606 M1139 500 V606 M1151 500 V606 M1163 500 V606 M1175 500 V606 M1187 500 V606 M895 512 H1190 M895 523 H1190 M895 534 H1190 M895 545 H1190 M895 556 H1190 M895 567 H1190 M895 578 H1190 M895 589 H1190 M895 600 H1190" stroke="#c2c2c2" stroke-width="1.4" fill="none" opacity="0.85"/>
<path d="M955 515 l12 6 l12 -6 l12 6 l12 -6 M1075 515 l12 6 l12 -6 l12 6 l12 -6 M955 526 l12 6 l12 -6 l12 6 l12 -6 M1075 526 l12 6 l12 -6 l12 6 l12 -6 M955 537 l12 6 l12 -6 l12 6 l12 -6 M1075 537 l12 6 l12 -6 l12 6 l12 -6 M955 548 l12 6 l12 -6 l12 6 l12 -6 M1075 548 l12 6 l12 -6 l12 6 l12 -6 M955 559 l12 6 l12 -6 l12 6 l12 -6 M1075 559 l12 6 l12 -6 l12 6 l12 -6 M955 570 l12 6 l12 -6 l12 6 l12 -6 M1075 570 l12 6 l12 -6 l12 6 l12 -6 M955 581 l12 6 l12 -6 l12 6 l12 -6 M1075 581 l12 6 l12 -6 l12 6 l12 -6 M955 592 l12 6 l12 -6 l12 6 l12 -6 M1075 592 l12 6 l12 -6 l12 6 l12 -6" stroke="#b0b0b0" stroke-width="1" fill="none"/>
<path d="M1030 500 H1052 V560 H1030 Z" fill="#cfcfcf"/><path d="M1034 505 V560 M1048 505 V560" stroke="#a0a0a0" stroke-width="1.5"/>
<polygon points="899,446 950,446 948,530 904,545" fill="url(#pMesh)"/>
<polygon points="1133,446 1190,446 1188,545 1136,530" fill="url(#pMesh)"/>
<path d="M902 546 L950 531 M1136 531 L1190 546" stroke="#bdbdbd" stroke-width="2"/>
<rect x="956" y="446" width="172" height="36" fill="url(#pTray)"/>
<path d="M953 447 V490 Q953 500 963 500 H1123 Q1131 500 1131 490 V447" fill="none" stroke="#3d3e3d" stroke-width="5"/>
<rect x="956" y="478" width="172" height="20" fill="#3a3b3a"/>
<rect x="876" y="434" width="331" height="5" fill="#c4c4c4"/><rect x="900" y="439" width="283" height="4" fill="#6a6a6a"/>
<path d="M895 480 Q895 446 920 443" stroke="#bdbdbd" stroke-width="4" fill="none"/><path d="M1188 480 Q1188 446 1163 443" stroke="#bdbdbd" stroke-width="4" fill="none"/>
<path d="M890 566 H1002 V592 H1081 V566 H1195" stroke="#cdcdcd" stroke-width="3" fill="none"/>
<rect x="1007" y="559" width="69" height="31" rx="3" fill="#5f5f5f"/><rect x="1007" y="559" width="69" height="4" fill="#8a8a8a"/>
<rect x="890" y="608" width="305" height="190" fill="url(#gLow)"/>
<polygon points="886,608 897,608 903,792 892,792" fill="#7a7a7a"/><polygon points="897,608 912,608 917,792 903,792" fill="#c6c6c6"/>
<polygon points="1185,608 1196,608 1190,792 1180,792" fill="#6e6e6e"/><polygon points="1171,608 1185,608 1180,792 1166,792" fill="#bcbcbc"/>
<path d="M890 606 H1195" stroke="#d0d0d0" stroke-width="3.5"/>
<rect x="983" y="669" width="44" height="64" rx="4" fill="#6e6e6e"/>
<polygon points="942,632 948,626 1110,690 1105,698" fill="#575757"/>
<ellipse cx="951" cy="674" rx="24" ry="15" fill="#5a5a5a"/>
<rect x="1005" y="734" width="72" height="34" rx="2" fill="#666"/>
<path d="M905 640 l10 50 M907 700 l8 90 M918 640 l10 50 M920 700 l8 90 M931 640 l10 50 M933 700 l8 90 M944 640 l10 50 M946 700 l8 90 M957 640 l10 50 M959 700 l8 90 M970 640 l10 50 M972 700 l8 90 M983 640 l10 50 M985 700 l8 90 M996 640 l10 50 M998 700 l8 90 M1009 640 l10 50 M1011 700 l8 90 M1022 640 l10 50 M1024 700 l8 90 M1035 640 l10 50 M1037 700 l8 90 M1048 640 l10 50 M1050 700 l8 90 M1061 640 l10 50 M1063 700 l8 90 M1074 640 l10 50 M1076 700 l8 90 M1087 640 l10 50 M1089 700 l8 90 M1100 640 l10 50 M1102 700 l8 90 M1113 640 l10 50 M1115 700 l8 90 M1126 640 l10 50 M1128 700 l8 90 M1139 640 l10 50 M1141 700 l8 90 M1152 640 l10 50 M1154 700 l8 90 M1165 640 l10 50 M1167 700 l8 90 M1178 640 l10 50 M1180 700 l8 90" stroke="#9e9e9e" stroke-width="1.3" fill="none"/>
<path d="M890 634 H1195 M890 691 H1195" stroke="#b8b8b8" stroke-width="2" fill="none"/>
</g>
<polygon points="884,790 1199,790 1220,955 862,955" fill="#d9d9d9"/>
<path d="M884 790 L862 955 M1199 790 L1220 955" stroke="#b0b0b0" stroke-width="1.5"/>
<path d="M892 800 L871 935 M1192 800 L1212 935" stroke="#c2c2c2" stroke-width="1"/>
<path d="M897 796 H1186 L1200 912 Q1200 927 1186 927 H890 Q876 927 878 912 Z" fill="#d6d6d6"/>
<polygon points="899,814 917,800 912,917 893,917" fill="#c4c4c4"/>
<polygon points="1167,804 1186,796 1190,917 1174,917" fill="#bcbcbc"/>
<polygon points="1170,800 1188,796 1192,860 1180,845" fill="#9a9a9a"/>
<path d="M968 805 L963 917 M1114 805 L1119 917" stroke="#c0c0c0" stroke-width="2"/>
<path d="M876 925 Q876 944 894 944 H1190 Q1206 944 1206 925 Z" fill="#8e8e8e"/><rect x="878" y="925" width="328" height="4" fill="#7a7a7a"/><path d="M880 944 H1204" stroke="#777" stroke-width="1"/>
<rect x="985" y="821" width="113" height="30" fill="#b9b9b9"/><rect x="1045" y="828" width="53" height="23" fill="#a9a9a9"/>
<rect x="985" y="850" width="113" height="10" fill="#5a5b5a"/>
<path d="M990 855 H1092" stroke="#b5b5b5" stroke-width="1" stroke-dasharray="12 5"/>
<polygon points="862,955 1220,955 1220,970 864,970" fill="#5b5c5a"/>
<path d="M923 782 V800M971 782 V800M1002 782 V800M1037 782 V800M1077 782 V800M1126 782 V800M1158 782 V800" stroke="#8a8a8a" stroke-width="1.5"/>
<path d="M893 735 L906 758 H1000 L1010 770 H1190 M895 762 L906 782 H1190 M896 797 H1188" stroke="#c8c8c8" stroke-width="3" fill="none"/>
<rect x="1096" y="684" width="76" height="131" rx="3" fill="url(#pCut)"/>
<rect x="1096" y="684" width="76" height="55" rx="3" fill="#444" opacity="0.35"/>
<rect x="1130" y="655" width="12" height="160" fill="#5a5a5a"/>
<path d="M1096 758 H1173 M1096 782 H1173" stroke="#c8c8c8" stroke-width="2"/>
<polygon points="889,321 1193,321 1211,434 872,434" fill="url(#gTop)"/>
<path d="M872 434 H1211" stroke="#b0b0b0" stroke-width="2"/>
<path d="M897 328 l-2 20 M1187 328 l2 20 M878 400 l-2 25 M1203 400 l2 25" stroke="#888" stroke-width="1"/>
<ellipse cx="1032" cy="379" rx="42" ry="20" transform="rotate(-14 1032 379)" fill="none" stroke="#777" stroke-width="1.6" stroke-dasharray="6 4"/>
<ellipse cx="1022" cy="387" rx="12" ry="5" transform="rotate(-14 1022 387)" fill="none" stroke="#777" stroke-width="1.2" stroke-dasharray="4 3"/>
<g fill="none" stroke="#fff" stroke-width="0" stroke-linejoin="round"><path d="M574 378.5 L1041 377"/><path d="M574 512.8 H1010 L1032 488"/><path d="M574 593.2 H886"/><path d="M574 648.7 H926 L952 677"/><path d="M574 731.8 H1015 L1039 708"/><path d="M574 790.7 H915"/><path d="M574 840.8 H1024"/><path d="M1479 554.8 H1137"/><path d="M1479 612 L1009 618"/><path d="M1479 651 L1038 656"/><path d="M1479 724.7 H1144"/><path d="M1479 882.9 H1191"/><path d="M1478 965.2 H1183"/></g><g fill="none" stroke="#1A80C5" stroke-width="8" stroke-linejoin="round"><path d="M574 378.5 L1041 377"/><path d="M574 512.8 H1010 L1032 488"/><path d="M574 593.2 H886"/><path d="M574 648.7 H926 L952 677"/><path d="M574 731.8 H1015 L1039 708"/><path d="M574 790.7 H915"/><path d="M574 840.8 H1024"/><path d="M1479 554.8 H1137"/><path d="M1479 612 L1009 618"/><path d="M1479 651 L1038 656"/><path d="M1479 724.7 H1144"/><path d="M1479 882.9 H1191"/><path d="M1478 965.2 H1183"/></g><g fill="#1A80C5"><circle cx="1041.6" cy="377.3" r="17"/><circle cx="1032.5" cy="488.2" r="17"/><circle cx="886.4" cy="594.1" r="17"/><circle cx="951.3" cy="676.6" r="17"/><circle cx="1039.5" cy="708.8" r="17"/><circle cx="915.2" cy="792.1" r="17"/><circle cx="1024.4" cy="841.2" r="17"/><circle cx="1137.7" cy="554.6" r="17"/><circle cx="1008.9" cy="618" r="17"/><circle cx="1038.2" cy="656" r="17"/><circle cx="1143.9" cy="725.5" r="17"/><circle cx="1191.3" cy="883" r="17"/><circle cx="1183.2" cy="965" r="17"/></g><g fill="#1A80C5"><rect x="528" y="357" width="46" height="45"/><rect x="528" y="492" width="46" height="44"/><rect x="528" y="571" width="46" height="45"/><rect x="528" y="628" width="46" height="45"/><rect x="528" y="709" width="46" height="45"/><rect x="528" y="768" width="46" height="45"/><rect x="528" y="820" width="46" height="45"/><rect x="1479" y="532" width="47" height="44"/><rect x="1479" y="592" width="47" height="80"/><rect x="1479" y="704" width="47" height="45"/><rect x="1479" y="864" width="47" height="45"/><rect x="1478" y="942" width="46" height="44"/></g>

<path d="M1720 958.8 L1831.5 944.7 L1831.5 952.6 L1720 968.6 Z" fill="#1B83C9"/>
<path d="M1568.6 986.5 Q1620 974 1691.5 962" fill="none" stroke="#1B83C9" stroke-width="2.4" stroke-linecap="round"/>

</svg><div class=a style="left:-318px;top:-133px"><div class=t style='left:344.8px;top:173.7px;font-size:57.97px;color:#fff;letter-spacing:0.15px;'>Components Of A Dishwasher</div>
<div class=t style='left:1302.5px;top:355.8px;font-size:26.09px;color:#fff;transform:scaleX(0.8526);transform-origin:0 0;'>WHAT COMPONENTS CAN YOU</div>
<div class=t style='left:1302.5px;top:386.3px;font-size:26.09px;color:#fff;transform:scaleX(0.8613);transform-origin:0 0;'>NAME?</div>
<div class=t style='left:1302.5px;top:417.8px;font-size:26.09px;color:#0e1a26;font-weight:bold;transform:scaleX(0.8219);transform-origin:0 0;'>CLICK TO REVEAL</div>
<div class=t style='left:583.3px;top:356.1px;font-size:21.45px;color:#1A80C5;font-weight:bold;transform:scaleX(0.8855);transform-origin:0 0;'>UPPER CUTLERY BASKET</div>
<div class=t style='left:583.3px;top:489.3px;font-size:21.45px;color:#1A80C5;font-weight:bold;transform:scaleX(0.9231);transform-origin:0 0;'>CEILING IMPELLER</div>
<div class=t style='left:583.3px;top:571.8px;font-size:21.45px;color:#1A80C5;font-weight:bold;transform:scaleX(0.8976);transform-origin:0 0;'>UPPER BASKET RAIL</div>
<div class=t style='left:583.3px;top:626.8px;font-size:21.45px;color:#1A80C5;font-weight:bold;transform:scaleX(0.9318);transform-origin:0 0;'>SALT RESEVOIR LID</div>
<div class=t style='left:584.5px;top:709.4px;font-size:21.45px;color:#1A80C5;font-weight:bold;transform:scaleX(0.8856);transform-origin:0 0;'>FILTERS</div>
<div class=t style='left:583.3px;top:767.5px;font-size:21.45px;color:#1A80C5;font-weight:bold;transform:scaleX(0.8937);transform-origin:0 0;'>LOWER BASKET</div>
<div class=t style='left:583.3px;top:816.7px;font-size:21.45px;color:#1A80C5;font-weight:bold;transform:scaleX(0.9143);transform-origin:0 0;'>DETERGENT DISPENSER</div>
<div class=t style='left:1322.4px;top:530.6px;font-size:21.45px;color:#1A80C5;font-weight:bold;transform:scaleX(0.8812);transform-origin:0 0;'>UPPER BASKET</div>
<div class=t style='left:1304.2px;top:590.4px;font-size:21.45px;color:#1A80C5;font-weight:bold;transform:scaleX(0.8831);transform-origin:0 0;'>UPPER IMPELLER</div>
<div class=t style='left:1297.4px;top:631.8px;font-size:21.45px;color:#1A80C5;font-weight:bold;transform:scaleX(0.8912);transform-origin:0 0;'>LOWER IMPELLER</div>
<div class=t style='left:1297.4px;top:702.5px;font-size:21.45px;color:#1A80C5;font-weight:bold;transform:scaleX(0.8911);transform-origin:0 0;'>CUTLERY BASKET</div>
<div class=t style='left:1411.6px;top:858.8px;font-size:21.45px;color:#1A80C5;font-weight:bold;transform:scaleX(0.9143);transform-origin:0 0;'>DOOR</div>
<div class=t style='left:1304.5px;top:940.4px;font-size:21.45px;color:#1A80C5;font-weight:bold;transform:scaleX(0.8991);transform-origin:0 0;'>CONTROL PANEL</div>
<div class=t style='left:539.2px;top:362.2px;font-size:25.07px;color:#fff;transform:scaleX(0.8426);transform-origin:0 0;'>13</div>
<div class=t style='left:539.5px;top:497.2px;font-size:25.07px;color:#fff;transform:scaleX(0.8246);transform-origin:0 0;'>12</div>
<div class=t style='left:540.8px;top:577.7px;font-size:25.07px;color:#fff;transform:scaleX(0.7875);transform-origin:0 0;'>11</div>
<div class=t style='left:539.2px;top:634.9px;font-size:25.07px;color:#fff;transform:scaleX(0.8426);transform-origin:0 0;'>10</div>
<div class=t style='left:544.0px;top:716.2px;font-size:25.07px;color:#fff;'>9</div>
<div class=t style='left:544.0px;top:776.0px;font-size:25.07px;color:#fff;'>8</div>
<div class=t style='left:544.0px;top:827.2px;font-size:25.07px;color:#fff;'>7</div>
<div class=t style='left:1495.5px;top:540.2px;font-size:25.07px;color:#fff;'>1</div>
<div class=t style='left:1495.5px;top:599.7px;font-size:25.07px;color:#fff;'>2</div>
<div class=t style='left:1495.5px;top:638.4px;font-size:25.07px;color:#fff;'>3</div>
<div class=t style='left:1495.5px;top:711.9px;font-size:25.07px;color:#fff;'>4</div>
<div class=t style='left:1495.5px;top:871.1px;font-size:25.07px;color:#fff;'>5</div>
<div class=t style='left:1494.0px;top:951.2px;font-size:25.07px;color:#fff;'>6</div>
<div class=t style='left:1571.9px;top:901.9px;font-size:17.97px;color:#1B83C9;letter-spacing:0.29px;'>Official partner</div>
<div class=t style='left:1608.7px;top:921.0px;font-size:17.97px;color:#1B83C9;letter-spacing:0.48px;'>of the</div>
<div class=t style='left:1573.0px;top:957.1px;font-size:24.64px;color:#1B83C9;font-weight:bold;font-style:italic;transform:scaleX(1.0487);transform-origin:0 0;rotate:-11deg;'>everyday</div>
<div class=t style='left:1720.5px;top:896.9px;font-size:52px;color:#1B83C9;font-weight:bold;letter-spacing:-2.46px;-webkit-text-stroke:1.5px #1B83C9;'>beko</div></div></div>
<div class=a style="left:317px;top:132px;width:1562px;height:881px;border:1px solid #C8C8C8"></div>
<div class=a style="left:318px;top:133px;width:1560px;height:879px;overflow:hidden;"><svg width="1560" height="879" viewBox="318 133 1560 879">
<rect x="318" y="133" width="1560" height="879" fill="#fff"/>
<polygon points="318,133 1878,133 1878,215 318,349" fill="#1A80C5"/>
<rect x="1288" y="346" width="447" height="107" fill="#1A80C5"/>

<defs>
<linearGradient id="gTop" x1="0" y1="0" x2="0" y2="1"><stop offset="0" stop-color="#D5D5D5"/><stop offset="1" stop-color="#D0D0D0"/></linearGradient>
<linearGradient id="gWallL" x1="0" y1="0" x2="1" y2="0"><stop offset="0" stop-color="#a4a4a4"/><stop offset="0.45" stop-color="#8a8a8a"/><stop offset="0.7" stop-color="#676767"/><stop offset="1" stop-color="#b0b0b0"/></linearGradient>
<linearGradient id="gWallR" x1="0" y1="0" x2="1" y2="0"><stop offset="0" stop-color="#a9a9a9"/><stop offset="0.35" stop-color="#5a5a5a"/><stop offset="0.6" stop-color="#6e6e6e"/><stop offset="1" stop-color="#8a8a8a"/></linearGradient>
<linearGradient id="gLow" x1="0" y1="0" x2="0" y2="1"><stop offset="0" stop-color="#d9d9d9"/><stop offset="0.5" stop-color="#e2e2e2"/><stop offset="1" stop-color="#cfcfcf"/></linearGradient>
<linearGradient id="gUp" x1="0" y1="0" x2="0" y2="1"><stop offset="0" stop-color="#6c6c6c"/><stop offset="1" stop-color="#8a8a8a"/></linearGradient>
<pattern id="pMesh" width="10" height="9" patternUnits="userSpaceOnUse"><rect width="10" height="9" fill="#4a4b4a"/><rect x="1" y="1.5" width="5" height="5" fill="#1f201f"/><rect x="7" y="0" width="1.5" height="9" fill="#858585"/></pattern>
<pattern id="pCut" width="7" height="6" patternUnits="userSpaceOnUse"><rect width="7" height="6" fill="#6a6a6a"/><rect x="1" y="1" width="5" height="4" fill="#272827"/></pattern>
<pattern id="pTray" width="5" height="9" patternUnits="userSpaceOnUse"><rect width="5" height="9" fill="#9a9a9a"/><rect x="1.5" y="0" width="2" height="9" fill="#404040"/><rect x="0" y="7" width="5" height="1" fill="#bdbdbd"/></pattern>
<clipPath id="cIn"><polygon points="893,436 1190,436 1181,792 902,792"/></clipPath>
</defs>
<polygon points="872,434 1211,434 1199,792 884,792" fill="#777"/>
<polygon points="872,434 896,434 904,792 884,792" fill="url(#gWallL)"/>
<polygon points="1187,434 1211,434 1199,792 1179,792" fill="url(#gWallR)"/>
<g clip-path="url(#cIn)">
<rect x="890" y="438" width="305" height="170" fill="url(#gUp)"/>
<rect x="955" y="500" width="172" height="106" fill="#8a8a8a"/>
<path d="M899 500 V606 M911 500 V606 M923 500 V606 M935 500 V606 M947 500 V606 M959 500 V606 M971 500 V606 M983 500 V606 M995 500 V606 M1007 500 V606 M1019 500 V606 M1031 500 V606 M1043 500 V606 M1055 500 V606 M1067 500 V606 M1079 500 V606 M1091 500 V606 M1103 500 V606 M1115 500 V606 M1127 500 V606 M1139 500 V606 M1151 500 V606 M1163 500 V606 M1175 500 V606 M1187 500 V606 M895 512 H1190 M895 523 H1190 M895 534 H1190 M895 545 H1190 M895 556 H1190 M895 567 H1190 M895 578 H1190 M895 589 H1190 M895 600 H1190" stroke="#c2c2c2" stroke-width="1.4" fill="none" opacity="0.85"/>
<path d="M955 515 l12 6 l12 -6 l12 6 l12 -6 M1075 515 l12 6 l12 -6 l12 6 l12 -6 M955 526 l12 6 l12 -6 l12 6 l12 -6 M1075 526 l12 6 l12 -6 l12 6 l12 -6 M955 537 l12 6 l12 -6 l12 6 l12 -6 M1075 537 l12 6 l12 -6 l12 6 l12 -6 M955 548 l12 6 l12 -6 l12 6 l12 -6 M1075 548 l12 6 l12 -6 l12 6 l12 -6 M955 559 l12 6 l12 -6 l12 6 l12 -6 M1075 559 l12 6 l12 -6 l12 6 l12 -6 M955 570 l12 6 l12 -6 l12 6 l12 -6 M1075 570 l12 6 l12 -6 l12 6 l12 -6 M955 581 l12 6 l12 -6 l12 6 l12 -6 M1075 581 l12 6 l12 -6 l12 6 l12 -6 M955 592 l12 6 l12 -6 l12 6 l12 -6 M1075 592 l12 6 l12 -6 l12 6 l12 -6" stroke="#b0b0b0" stroke-width="1" fill="none"/>
<path d="M1030 500 H1052 V560 H1030 Z" fill="#cfcfcf"/><path d="M1034 505 V560 M1048 505 V560" stroke="#a0a0a0" stroke-width="1.5"/>
<polygon points="899,446 950,446 948,530 904,545" fill="url(#pMesh)"/>
<polygon points="1133,446 1190,446 1188,545 1136,530" fill="url(#pMesh)"/>
<path d="M902 546 L950 531 M1136 531 L1190 546" stroke="#bdbdbd" stroke-width="2"/>
<rect x="956" y="446" width="172" height="36" fill="url(#pTray)"/>
<path d="M953 447 V490 Q953 500 963 500 H1123 Q1131 500 1131 490 V447" fill="none" stroke="#3d3e3d" stroke-width="5"/>
<rect x="956" y="478" width="172" height="20" fill="#3a3b3a"/>
<rect x="876" y="434" width="331" height="5" fill="#c4c4c4"/><rect x="900" y="439" width="283" height="4" fill="#6a6a6a"/>
<path d="M895 480 Q895 446 920 443" stroke="#bdbdbd" stroke-width="4" fill="none"/><path d="M1188 480 Q1188 446 1163 443" stroke="#bdbdbd" stroke-width="4" fill="none"/>
<path d="M890 566 H1002 V592 H1081 V566 H1195" stroke="#cdcdcd" stroke-width="3" fill="none"/>
<rect x="1007" y="559" width="69" height="31" rx="3" fill="#5f5f5f"/><rect x="1007" y="559" width="69" height="4" fill="#8a8a8a"/>
<rect x="890" y="608" width="305" height="190" fill="url(#gLow)"/>
<polygon points="886,608 897,608 903,792 892,792" fill="#7a7a7a"/><polygon points="897,608 912,608 917,792 903,792" fill="#c6c6c6"/>
<polygon points="1185,608 1196,608 1190,792 1180,792" fill="#6e6e6e"/><polygon points="1171,608 1185,608 1180,792 1166,792" fill="#bcbcbc"/>
<path d="M890 606 H1195" stroke="#d0d0d0" stroke-width="3.5"/>
<rect x="983" y="669" width="44" height="64" rx="4" fill="#6e6e6e"/>
<polygon points="942,632 948,626 1110,690 1105,698" fill="#575757"/>
<ellipse cx="951" cy="674" rx="24" ry="15" fill="#5a5a5a"/>
<rect x="1005" y="734" width="72" height="34" rx="2" fill="#666"/>
<path d="M905 640 l10 50 M907 700 l8 90 M918 640 l10 50 M920 700 l8 90 M931 640 l10 50 M933 700 l8 90 M944 640 l10 50 M946 700 l8 90 M957 640 l10 50 M959 700 l8 90 M970 640 l10 50 M972 700 l8 90 M983 640 l10 50 M985 700 l8 90 M996 640 l10 50 M998 700 l8 90 M1009 640 l10 50 M1011 700 l8 90 M1022 640 l10 50 M1024 700 l8 90 M1035 640 l10 50 M1037 700 l8 90 M1048 640 l10 50 M1050 700 l8 90 M1061 640 l10 50 M1063 700 l8 90 M1074 640 l10 50 M1076 700 l8 90 M1087 640 l10 50 M1089 700 l8 90 M1100 640 l10 50 M1102 700 l8 90 M1113 640 l10 50 M1115 700 l8 90 M1126 640 l10 50 M1128 700 l8 90 M1139 640 l10 50 M1141 700 l8 90 M1152 640 l10 50 M1154 700 l8 90 M1165 640 l10 50 M1167 700 l8 90 M1178 640 l10 50 M1180 700 l8 90" stroke="#9e9e9e" stroke-width="1.3" fill="none"/>
<path d="M890 634 H1195 M890 691 H1195" stroke="#b8b8b8" stroke-width="2" fill="none"/>
</g>
<polygon points="884,790 1199,790 1220,955 862,955" fill="#d9d9d9"/>
<path d="M884 790 L862 955 M1199 790 L1220 955" stroke="#b0b0b0" stroke-width="1.5"/>
<path d="M892 800 L871 935 M1192 800 L1212 935" stroke="#c2c2c2" stroke-width="1"/>
<path d="M897 796 H1186 L1200 912 Q1200 927 1186 927 H890 Q876 927 878 912 Z" fill="#d6d6d6"/>
<polygon points="899,814 917,800 912,917 893,917" fill="#c4c4c4"/>
<polygon points="1167,804 1186,796 1190,917 1174,917" fill="#bcbcbc"/>
<polygon points="1170,800 1188,796 1192,860 1180,845" fill="#9a9a9a"/>
<path d="M968 805 L963 917 M1114 805 L1119 917" stroke="#c0c0c0" stroke-width="2"/>
<path d="M876 925 Q876 944 894 944 H1190 Q1206 944 1206 925 Z" fill="#8e8e8e"/><rect x="878" y="925" width="328" height="4" fill="#7a7a7a"/><path d="M880 944 H1204" stroke="#777" stroke-width="1"/>
<rect x="985" y="821" width="113" height="30" fill="#b9b9b9"/><rect x="1045" y="828" width="53" height="23" fill="#a9a9a9"/>
<rect x="985" y="850" width="113" height="10" fill="#5a5b5a"/>
<path d="M990 855 H1092" stroke="#b5b5b5" stroke-width="1" stroke-dasharray="12 5"/>
<polygon points="862,955 1220,955 1220,970 864,970" fill="#5b5c5a"/>
<path d="M923 782 V800M971 782 V800M1002 782 V800M1037 782 V800M1077 782 V800M1126 782 V800M1158 782 V800" stroke="#8a8a8a" stroke-width="1.5"/>
<path d="M893 735 L906 758 H1000 L1010 770 H1190 M895 762 L906 782 H1190 M896 797 H1188" stroke="#c8c8c8" stroke-width="3" fill="none"/>
<rect x="1096" y="684" width="76" height="131" rx="3" fill="url(#pCut)"/>
<rect x="1096" y="684" width="76" height="55" rx="3" fill="#444" opacity="0.35"/>
<rect x="1130" y="655" width="12" height="160" fill="#5a5a5a"/>
<path d="M1096 758 H1173 M1096 782 H1173" stroke="#c8c8c8" stroke-width="2"/>
<polygon points="889,321 1193,321 1211,434 872,434" fill="url(#gTop)"/>
<path d="M872 434 H1211" stroke="#b0b0b0" stroke-width="2"/>
<path d="M897 328 l-2 20 M1187 328 l2 20 M878 400 l-2 25 M1203 400 l2 25" stroke="#888" stroke-width="1"/>
<ellipse cx="1032" cy="379" rx="42" ry="20" transform="rotate(-14 1032 379)" fill="none" stroke="#777" stroke-width="1.6" stroke-dasharray="6 4"/>
<ellipse cx="1022" cy="387" rx="12" ry="5" transform="rotate(-14 1022 387)" fill="none" stroke="#777" stroke-width="1.2" stroke-dasharray="4 3"/>
<g fill="none" stroke="#fff" stroke-width="6.5" stroke-linejoin="round"><path d="M574 378.5 L1041 377"/><path d="M574 512.8 H1010 L1032 488"/><path d="M574 593.2 H886"/><path d="M574 648.7 H926 L952 677"/><path d="M574 731.8 H1015 L1039 708"/><path d="M574 790.7 H915"/><path d="M574 840.8 H1024"/><path d="M1479 554.8 H1137"/><path d="M1479 612 L1009 618"/><path d="M1479 651 L1038 656"/><path d="M1479 724.7 H1144"/><path d="M1479 882.9 H1191"/><path d="M1478 965.2 H1183"/></g><g fill="none" stroke="#1A80C5" stroke-width="3.6" stroke-linejoin="round"><path d="M574 378.5 L1041 377"/><path d="M574 512.8 H1010 L1032 488"/><path d="M574 593.2 H886"/><path d="M574 648.7 H926 L952 677"/><path d="M574 731.8 H1015 L1039 708"/><path d="M574 790.7 H915"/><path d="M574 840.8 H1024"/><path d="M1479 554.8 H1137"/><path d="M1479 612 L1009 618"/><path d="M1479 651 L1038 656"/><path d="M1479 724.7 H1144"/><path d="M1479 882.9 H1191"/><path d="M1478 965.2 H1183"/></g><g fill="#1A80C5"><circle cx="1041.6" cy="377.3" r="13.3"/><circle cx="1032.5" cy="488.2" r="13.3"/><circle cx="886.4" cy="594.1" r="13.3"/><circle cx="951.3" cy="676.6" r="13.3"/><circle cx="1039.5" cy="708.8" r="13.3"/><circle cx="915.2" cy="792.1" r="13.3"/><circle cx="1024.4" cy="841.2" r="13.3"/><circle cx="1137.7" cy="554.6" r="13.3"/><circle cx="1008.9" cy="618" r="13.3"/><circle cx="1038.2" cy="656" r="13.3"/><circle cx="1143.9" cy="725.5" r="13.3"/><circle cx="1191.3" cy="883" r="13.3"/><circle cx="1183.2" cy="965" r="13.3"/></g><g fill="#1A80C5"><rect x="528" y="357" width="46" height="45"/><rect x="528" y="492" width="46" height="44"/><rect x="528" y="571" width="46" height="45"/><rect x="528" y="628" width="46" height="45"/><rect x="528" y="709" width="46" height="45"/><rect x="528" y="768" width="46" height="45"/><rect x="528" y="820" width="46" height="45"/><rect x="1479" y="532" width="47" height="44"/><rect x="1479" y="592" width="47" height="80"/><rect x="1479" y="704" width="47" height="45"/><rect x="1479" y="864" width="47" height="45"/><rect x="1478" y="942" width="46" height="44"/></g>

<path d="M1720 958.8 L1831.5 944.7 L1831.5 952.6 L1720 968.6 Z" fill="#1B83C9"/>
<path d="M1568.6 986.5 Q1620 974 1691.5 962" fill="none" stroke="#1B83C9" stroke-width="2.4" stroke-linecap="round"/>

</svg><div class=a style="left:-318px;top:-133px"><div class=t style='left:344.8px;top:173.7px;font-size:57.97px;color:#fff;letter-spacing:0.15px;'>Components Of A Dishwasher</div>
<div class=t style='left:1302.5px;top:355.8px;font-size:26.09px;color:#fff;transform:scaleX(0.8526);transform-origin:0 0;'>WHAT COMPONENTS CAN YOU</div>
<div class=t style='left:1302.5px;top:386.3px;font-size:26.09px;color:#fff;transform:scaleX(0.8613);transform-origin:0 0;'>NAME?</div>
<div class=t style='left:1302.5px;top:417.8px;font-size:26.09px;color:#0e1a26;transform:scaleX(0.8441);transform-origin:0 0;'>CLICK TO REVEAL</div>
<div class=t style='left:583.3px;top:356.1px;font-size:21.45px;color:#1A80C5;transform:scaleX(0.8997);transform-origin:0 0;'>UPPER CUTLERY BASKET</div>
<div class=t style='left:583.3px;top:489.3px;font-size:21.45px;color:#1A80C5;transform:scaleX(0.9395);transform-origin:0 0;'>CEILING IMPELLER</div>
<div class=t style='left:583.3px;top:571.8px;font-size:21.45px;color:#1A80C5;transform:scaleX(0.9235);transform-origin:0 0;'>UPPER BASKET RAIL</div>
<div class=t style='left:583.3px;top:626.8px;font-size:21.45px;color:#1A80C5;transform:scaleX(0.9494);transform-origin:0 0;'>SALT RESEVOIR LID</div>
<div class=t style='left:584.5px;top:709.4px;font-size:21.45px;color:#1A80C5;transform:scaleX(0.8976);transform-origin:0 0;'>FILTERS</div>
<div class=t style='left:583.3px;top:767.5px;font-size:21.45px;color:#1A80C5;transform:scaleX(0.9187);transform-origin:0 0;'>LOWER BASKET</div>
<div class=t style='left:583.3px;top:816.7px;font-size:21.45px;color:#1A80C5;transform:scaleX(0.9157);transform-origin:0 0;'>DETERGENT DISPENSER</div>
<div class=t style='left:1322.4px;top:530.6px;font-size:21.45px;color:#1A80C5;transform:scaleX(0.9002);transform-origin:0 0;'>UPPER BASKET</div>
<div class=t style='left:1304.2px;top:590.4px;font-size:21.45px;color:#1A80C5;transform:scaleX(0.8942);transform-origin:0 0;'>UPPER IMPELLER</div>
<div class=t style='left:1297.4px;top:631.8px;font-size:21.45px;color:#1A80C5;transform:scaleX(0.9076);transform-origin:0 0;'>LOWER IMPELLER</div>
<div class=t style='left:1297.4px;top:702.5px;font-size:21.45px;color:#1A80C5;transform:scaleX(0.9113);transform-origin:0 0;'>CUTLERY BASKET</div>
<div class=t style='left:1411.6px;top:858.8px;font-size:21.45px;color:#1A80C5;transform:scaleX(0.9143);transform-origin:0 0;'>DOOR</div>
<div class=t style='left:1304.5px;top:940.4px;font-size:21.45px;color:#1A80C5;transform:scaleX(0.9189);transform-origin:0 0;'>CONTROL PANEL</div>
<div class=t style='left:539.2px;top:362.2px;font-size:25.07px;color:#fff;transform:scaleX(0.8426);transform-origin:0 0;'>13</div>
<div class=t style='left:539.5px;top:497.2px;font-size:25.07px;color:#fff;transform:scaleX(0.8246);transform-origin:0 0;'>12</div>
<div class=t style='left:540.8px;top:577.7px;font-size:25.07px;color:#fff;transform:scaleX(0.7875);transform-origin:0 0;'>11</div>
<div class=t style='left:539.2px;top:634.9px;font-size:25.07px;color:#fff;transform:scaleX(0.8426);transform-origin:0 0;'>10</div>
<div class=t style='left:544.0px;top:716.2px;font-size:25.07px;color:#fff;'>9</div>
<div class=t style='left:544.0px;top:776.0px;font-size:25.07px;color:#fff;'>8</div>
<div class=t style='left:544.0px;top:827.2px;font-size:25.07px;color:#fff;'>7</div>
<div class=t style='left:1495.5px;top:540.2px;font-size:25.07px;color:#fff;'>1</div>
<div class=t style='left:1495.5px;top:599.7px;font-size:25.07px;color:#fff;'>2</div>
<div class=t style='left:1495.5px;top:638.4px;font-size:25.07px;color:#fff;'>3</div>
<div class=t style='left:1495.5px;top:711.9px;font-size:25.07px;color:#fff;'>4</div>
<div class=t style='left:1495.5px;top:871.1px;font-size:25.07px;color:#fff;'>5</div>
<div class=t style='left:1494.0px;top:951.2px;font-size:25.07px;color:#fff;'>6</div>
<div class=t style='left:1571.9px;top:901.9px;font-size:17.97px;color:#1B83C9;letter-spacing:0.29px;'>Official partner</div>
<div class=t style='left:1608.7px;top:921.0px;font-size:17.97px;color:#1B83C9;letter-spacing:0.48px;'>of the</div>
<div class=t style='left:1573.0px;top:957.1px;font-size:24.64px;color:#1B83C9;font-weight:bold;font-style:italic;transform:scaleX(1.0487);transform-origin:0 0;rotate:-11deg;'>everyday</div>
<div class=t style='left:1720.5px;top:896.9px;font-size:52px;color:#1B83C9;font-weight:bold;letter-spacing:-2.46px;-webkit-text-stroke:1.5px #1B83C9;'>beko</div></div></div><div style="position:absolute;left:0;top:0"><div class=t style='left:12.0px;top:127.7px;font-size:15.36px;color:#444;transform:scaleX(0.8951);transform-origin:0 0;'>79</div>
<div class=t style='left:12.0px;top:270.7px;font-size:15.36px;color:#D24726;transform:scaleX(0.8951);transform-origin:0 0;'>80</div>
<div class=t style='left:12.0px;top:413.7px;font-size:15.36px;color:#444;transform:scaleX(0.8951);transform-origin:0 0;'>81</div>
<div class=t style='left:12.0px;top:556.7px;font-size:15.36px;color:#444;transform:scaleX(0.8951);transform-origin:0 0;'>82</div>
<div class=t style='left:12.0px;top:699.7px;font-size:15.36px;color:#444;transform:scaleX(0.8951);transform-origin:0 0;'>83</div>
<div class=t style='left:12.0px;top:842.7px;font-size:15.36px;color:#444;transform:scaleX(0.8951);transform-origin:0 0;'>84</div>
<div class=t style='left:12.0px;top:985.7px;font-size:15.36px;color:#444;transform:scaleX(0.8951);transform-origin:0 0;'>85</div>
<div class=t style='left:69.1px;top:134.5px;font-size:15.5px;color:#fff;font-weight:bold;letter-spacing:0.47px;'>beko</div>
<div class=t style='left:67.5px;top:160.1px;font-size:10.14px;color:#24408e;font-weight:bold;letter-spacing:-1.03px;'>Currys</div>
<div class=t style='left:48.8px;top:174.4px;font-size:9.86px;color:#fff;letter-spacing:0.37px;'>Beko Pro Range</div>
<div class=t style='left:67.9px;top:194.7px;font-size:6.38px;color:#fff;font-weight:bold;letter-spacing:-0.08px;'>Dishwashers</div>
<div class=t style='left:59.9px;top:204.5px;font-size:6.38px;color:#fff;font-weight:bold;letter-spacing:0.05px;'>Let's Take A Look</div>
<div class=t style='left:39.8px;top:423.0px;font-size:8.99px;color:#fff;font-weight:bold;transform:scaleX(0.8440);transform-origin:0 0;'>ProSmart&#8482; Inverter Motor</div>
<div class=t style='left:39.8px;top:566.9px;font-size:8.99px;color:#fff;font-weight:bold;transform:scaleX(0.8378);transform-origin:0 0;'>So What Is 14 Place Settings?</div>
<div class=t style='left:39.8px;top:710.1px;font-size:8.99px;color:#fff;font-weight:bold;transform:scaleX(0.8167);transform-origin:0 0;'>Dishwasher Place Settings</div>
<div class=t style='left:39.8px;top:851.9px;font-size:8.99px;color:#fff;font-weight:bold;transform:scaleX(0.8402);transform-origin:0 0;'>A Great Auto Programme Demonstration</div>
<div class=t style='left:39.8px;top:994.8px;font-size:8.99px;color:#fff;font-weight:bold;transform:scaleX(0.8520);transform-origin:0 0;'>Auto 40-65&#176;C Programme</div></div><svg width="1919" height="1055" style="z-index:5">
<rect x="0" y="1032" width="1919" height="21" fill="#D24726"/>
<rect x="0" y="1053" width="1919" height="1" fill="#3d3340"/><rect x="0" y="1054" width="1919" height="1" fill="#c6bfcd"/>
<rect x="1565" y="1032" width="38" height="21" fill="#B73A1E"/>
<!-- notes edit icon -->
<path d="M109.5 1037.5 Q112.5 1036 116.5 1037.5 V1047.5 Q112.5 1046 109.5 1047.5 Z M116.5 1037.5 Q119 1036.5 121 1037 M116.5 1047.5 Q119 1046 122.5 1047.5 V1044" fill="none" stroke="#fff" stroke-width="1"/>
<path d="M117.5 1044 L123 1038.5 L124.5 1040 L119 1045.5 Z" fill="none" stroke="#fff" stroke-width="0.9"/>
<!-- notes icon -->
<path d="M1402.5 1036 l-4 3.5 h8 z" fill="#fff"/>
<rect x="1397.5" y="1041" width="11" height="1" fill="#fff"/><rect x="1397.5" y="1043.5" width="11" height="1" fill="#fff"/><rect x="1397.5" y="1046" width="11" height="1" fill="#fff"/>
<!-- comments icon -->
<path d="M1468.5 1036.5 h12 v8 h-7 l-3 3 v-3 h-2 z" fill="#fff"/>
<!-- normal view -->
<rect x="1577" y="1036" width="14" height="13" fill="#fff"/>
<rect x="1579.5" y="1038" width="9" height="6" fill="#B73A1E"/><rect x="1580.5" y="1039" width="7" height="4" fill="#fff"/>
<rect x="1578.5" y="1045.5" width="11" height="2" fill="#B73A1E"/>
<!-- slide sorter -->
<rect x="1615" y="1036" width="6" height="5.5" fill="#fff"/><rect x="1623" y="1036" width="6" height="5.5" fill="#fff"/>
<rect x="1615" y="1043" width="6" height="5.5" fill="#fff"/><rect x="1623" y="1043" width="6" height="5.5" fill="#fff"/>
<!-- reading view -->
<path d="M1653 1036.5 q6 -1 6.5 1.5 q0.5 -2.5 6.5 -1.5 v11 q-6 -1 -6.5 1.5 q-0.5 -2.5 -6.5 -1.5 z" fill="none" stroke="#fff" stroke-width="1.2"/>
<path d="M1655 1039.5h3M1655 1042h3M1655 1044.5h3M1661 1039.5h3M1661 1042h3M1661 1044.5h3" stroke="#fff" stroke-width="0.8"/>
<!-- slideshow -->
<rect x="1690.5" y="1036.5" width="14" height="2" fill="#fff"/>
<rect x="1692" y="1038.5" width="11" height="5" fill="none" stroke="#fff" stroke-width="1.2"/>
<path d="M1697.5 1043.5 v4 M1694.5 1048.5 h6" stroke="#fff" stroke-width="1.3"/>
<!-- zoom -->
<rect x="1722" y="1042" width="6" height="1.6" fill="#fff"/>
<rect x="1732.5" y="1042" width="99.5" height="1" fill="#fff"/>
<rect x="1784" y="1037" width="3" height="11" fill="#fff"/>
<rect x="1835" y="1042" width="9" height="1.6" fill="#fff"/><rect x="1838.7" y="1038.3" width="1.6" height="9" fill="#fff"/>
<!-- fit -->
<rect x="1900.5" y="1036.5" width="12" height="12" fill="none" stroke="#fff" stroke-width="1"/>
<path d="M1906.5 1038v3M1906.5 1044v3M1902 1042.5h3M1908 1042.5h3" stroke="#fff" stroke-width="1"/>
</svg><div style="position:absolute;left:0;top:0;z-index:6"><div class=t style='left:8.1px;top:1036.4px;font-size:11.88px;color:#fff;transform:scaleX(0.8599);transform-origin:0 0;'>SLIDE 80 OF 181</div>
<div class=t style='left:1414.3px;top:1037.3px;font-size:11.88px;color:#fff;transform:scaleX(0.8235);transform-origin:0 0;'>NOTES</div>
<div class=t style='left:1485.3px;top:1037.3px;font-size:11.88px;color:#fff;transform:scaleX(0.8718);transform-origin:0 0;'>COMMENTS</div>
<div class=t style='left:1858.4px;top:1037.3px;font-size:11.88px;color:#fff;transform:scaleX(0.8955);transform-origin:0 0;'>122%</div></div>
</body></html>
